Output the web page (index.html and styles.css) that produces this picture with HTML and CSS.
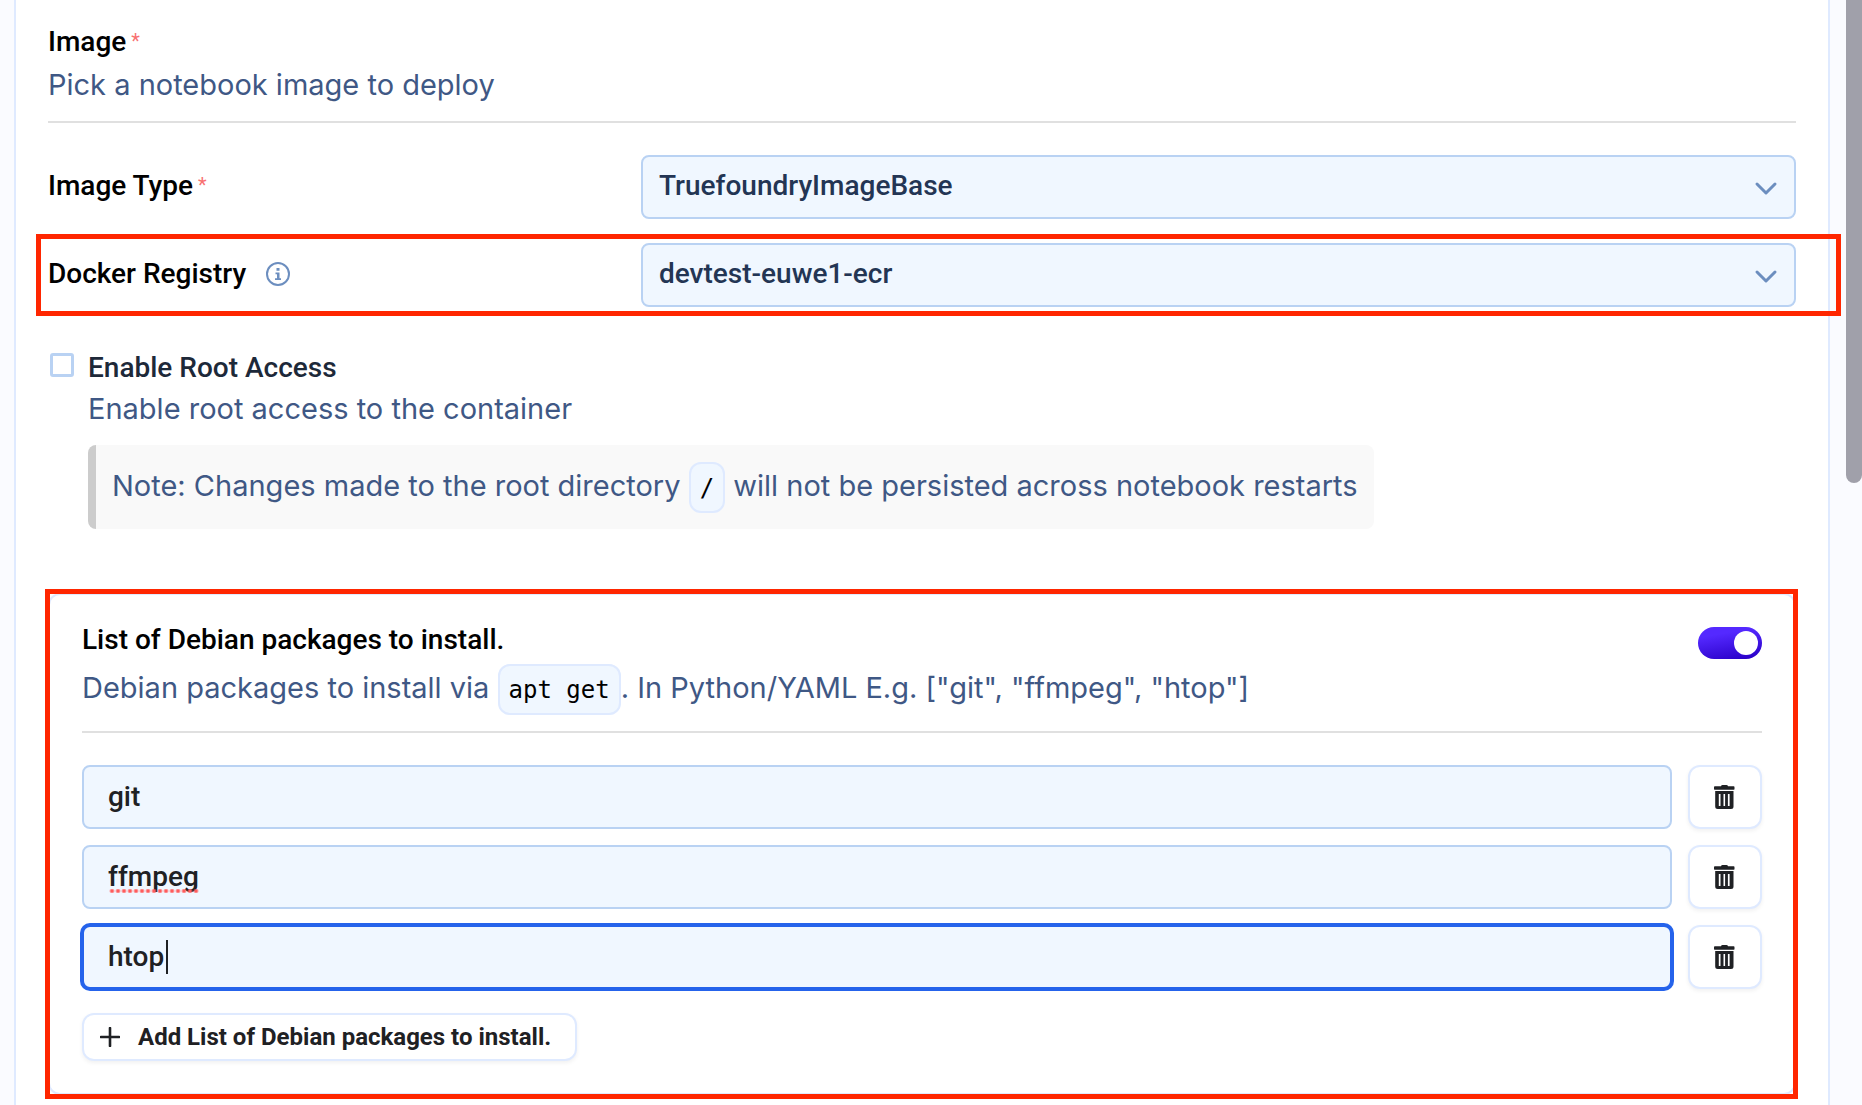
FILE: index.html
```html
<!DOCTYPE html>
<html lang="en">
<head>
<meta charset="utf-8">
<meta name="viewport" content="width=device-width, initial-scale=1">
<title>Notebook image</title>
<link rel="stylesheet" href="styles.css">
</head>
<body>
<svg class="sprite" aria-hidden="true">
  <symbol id="chevron" viewBox="0 0 24 24"><path d="M3 8l9 9 9-9" fill="none" stroke="currentColor" stroke-width="3" stroke-linecap="round" stroke-linejoin="round"/></symbol>
  <symbol id="trash" viewBox="0 0 22 24"><path fill="currentColor" fill-rule="evenodd" d="M7 1.300Q7.300 0 8.500 0h4Q13.700 0 14 1.300h5.700a1 1 0 0 1 .8 1V4a.7.7 0 0 1-.8.700H.800A.7.700 0 0 1 0 4V2.300a1 1 0 0 1 .8-1zM1.200 6h18.300v15.500a2.500 2.500 0 0 1-2.500 2.500H3.700A2.500 2.500 0 0 1 1.200 21.500zM4.800 9v12h1.700V9zm4.700 0v12h1.600V9zm4.400 0v12h1.700V9z"/></symbol>
</svg>
<main class="panel">
  <header class="section-head">
    <h2 class="title">Image<span class="required">*</span></h2>
    <p class="desc">Pick a notebook image to deploy</p>
  </header>

  <div class="rows">
    <div class="row">
      <div class="row-label">
        <label class="title" for="image-type">Image Type<span class="required">*</span></label>
      </div>
      <div class="select">
        <select id="image-type"><option>TruefoundryImageBase</option></select>
        <svg class="chevron" aria-hidden="true"><use href="#chevron"/></svg>
      </div>
    </div>
    <div class="row">
      <div class="row-label">
        <label class="title" for="registry">Docker Registry</label>
        <svg class="info" viewBox="0 0 24 24" aria-hidden="true"><circle cx="12" cy="12" r="11" fill="none" stroke="currentColor" stroke-width="2"/><path fill="currentColor" d="M10.500 6h3v2.800h-3zM9.500 10.500h4v5.700H15V18H9v-1.800h2v-3.900H9.500z"/></svg>
      </div>
      <div class="select">
        <select id="registry"><option>devtest-euwe1-ecr</option></select>
        <svg class="chevron" aria-hidden="true"><use href="#chevron"/></svg>
      </div>
      <div class="highlight highlight-row"></div>
    </div>
  </div>

  <div class="check">
    <input class="box" type="checkbox" id="root">
    <div class="check-body">
      <label class="title check-title" for="root">Enable Root Access</label>
      <p class="desc">Enable root access to the container</p>
      <blockquote class="note desc">Note: Changes made to the root directory <code>/</code> will not be persisted across notebook restarts</blockquote>
    </div>
  </div>

  <section class="card">
    <header class="section-head card-head">
      <div>
        <h2 class="title" id="pkg-title">List of Debian packages to install.</h2>
        <p class="desc code-line">Debian packages to install via <code>apt get</code>. In Python/YAML E.g. ["git", "ffmpeg", "htop"]</p>
      </div>
      <input class="toggle" type="checkbox" role="switch" aria-labelledby="pkg-title" checked>
    </header>
    <div class="packages">
      <div class="package">
        <div class="field"><input type="text" aria-label="Package 1" value="git" spellcheck="false"></div>
        <button class="button remove" type="button" aria-label="Remove git"><svg aria-hidden="true"><use href="#trash"/></svg></button>
      </div>
      <div class="package">
        <div class="field"><input type="text" aria-label="Package 2" value="ffmpeg" spellcheck="false"><span class="spelling"></span></div>
        <button class="button remove" type="button" aria-label="Remove ffmpeg"><svg aria-hidden="true"><use href="#trash"/></svg></button>
      </div>
      <div class="package">
        <div class="field is-active"><input type="text" aria-label="Package 3" value="htop" spellcheck="false"><span class="caret"></span></div>
        <button class="button remove" type="button" aria-label="Remove htop"><svg aria-hidden="true"><use href="#trash"/></svg></button>
      </div>
    </div>
    <button class="button add" type="button">
      <svg viewBox="0 0 20 20" aria-hidden="true"><path d="M10 1v18M1 10h18" fill="none" stroke="currentColor" stroke-width="2.600" stroke-linecap="round"/></svg>
      Add List of Debian packages to install.
    </button>
    <div class="highlight highlight-card"></div>
  </section>
</main>
<div class="scroll-thumb"></div>
</body>
</html>
```
FILE: styles.css
```css
* { box-sizing: border-box; }

body {
  margin: 0;
  min-height: 100vh;
  display: flex;
  overflow: hidden;
  background: #fafbff;
  color: #000;
  font-family: Roboto, "Liberation Sans", sans-serif;
}

h2, p, blockquote { margin: 0; }

.sprite { position: absolute; width: 0; height: 0; }

.panel {
  flex: 1;
  min-width: 0;
  margin: 0 32px 0 14px;
  padding: 24px 32px 0;
  border: solid #dfeaff;
  border-width: 0 2px;
  background: #fff;
}

.title {
  font-size: 28px;
  font-weight: 500;
  line-height: 36px;
}

.required {
  margin-left: 5px;
  color: #f87171;
  font-size: 20px;
  font-weight: 400;
  vertical-align: 3px;
  line-height: 20px;
}

.desc {
  color: #3f5885;
  font-family: Inter, "Open Sans", sans-serif;
  font-size: 29px;
  font-weight: 400;
  line-height: 36px;
}

.section-head {
  padding-bottom: 18px;
  border-bottom: 2px solid #e0e0e0;
}

.section-head .desc { margin-top: 7px; }

.rows {
  display: grid;
  gap: 24px;
  padding-top: 32px;
}

.row {
  position: relative;
  display: grid;
  grid-template-columns: 593px 1fr;
  align-items: center;
}

.row-label {
  display: flex;
  align-items: center;
  gap: 20px;
  padding-bottom: 2px;
}

.info { width: 24px; height: 24px; color: #6c8ebf; }

.select { position: relative; }

.select select {
  display: block;
  width: 100%;
  height: 64px;
  padding: 0 60px 2px 16px;
  appearance: none;
  border: 2px solid #b9d2f3;
  border-radius: 8px;
  background: #f0f7ff;
  color: #233554;
  font: 500 28px/36px Roboto, "Liberation Sans", sans-serif;
}

.chevron {
  position: absolute;
  right: 18px;
  top: 21px;
  width: 24px;
  height: 24px;
  color: #6c8ebf;
  pointer-events: none;
}

.check {
  display: flex;
  gap: 14px;
  padding: 42px 2px 0;
}

.box {
  appearance: none;
  flex: none;
  width: 24px;
  height: 24px;
  margin: 4px 0 0;
  border: 3px solid #b9d2f3;
  border-radius: 3px;
  background: #fff;
}

.check-body {
  display: flex;
  flex-direction: column;
  align-items: flex-start;
}

.check-title { padding-top: 1px; color: #1d2939; }

.check-body .desc { margin-top: 5px; }

.check-body .note {
  margin-top: 18px;
  padding: 16px 16px 18px;
  border-left: 8px solid #ccc;
  border-radius: 8px;
  background: #f9f9f9;
  line-height: 50px;
}

code {
  padding: 10px 9px 9px;
  border: 2px solid #dfeaff;
  border-radius: 12px;
  background: #f0f7ff;
  color: #000;
  font-family: "DejaVu Sans Mono", "Liberation Mono", monospace;
  font-size: 24px;
  font-weight: 400;
  line-height: 24px;
}

.card {
  position: relative;
  margin-top: 64px;
  padding: 27px 32px 32px;
  border: 2px solid #dfeaff;
  border-radius: 12px;
}

.card-head {
  display: flex;
  justify-content: space-between;
  align-items: flex-start;
}

.card-head .code-line { margin-top: 5px; line-height: 50px; }

.toggle {
  appearance: none;
  display: flex;
  justify-content: flex-end;
  flex: none;
  width: 64px;
  height: 32px;
  margin: 5px 0 0;
  padding: 4px;
  border-radius: 16px;
  background: linear-gradient(170deg, #5429ff 25%, #2a00c8 95%);
}

.toggle::before {
  content: "";
  width: 24px;
  height: 24px;
  border-radius: 50%;
  background: #fff;
}

.packages {
  display: grid;
  gap: 16px;
  padding: 32px 0 24px;
}

.package { display: flex; gap: 16px; }

.field { position: relative; flex: 1; }

.field input {
  display: block;
  width: 100%;
  height: 64px;
  padding: 0 24px 2px;
  border: 2px solid #b9d2f3;
  border-radius: 8px;
  outline: none;
  background: #f0f7ff;
  color: #1f2124;
  font: 500 28px/36px Roboto, "Liberation Sans", sans-serif;
}

.is-active input {
  border-color: #2563eb;
  box-shadow: 0 0 0 2px #2563eb;
}

.spelling {
  position: absolute;
  left: 27px;
  top: 44px;
  width: 90px;
  height: 4px;
  background: radial-gradient(circle, #ff5c5c 1px, #ff5c5c 1px, transparent 3px) 0 0 / 6px 4px;
}

.caret {
  position: absolute;
  left: 84px;
  top: 15px;
  width: 2px;
  height: 34px;
  background: #1f2124;
}

.button {
  border: 2px solid #dfeaff;
  border-radius: 12px;
  background: #fff;
  box-shadow: 0 2px 4px rgba(0, 0, 0, .06);
  color: #1f2124;
}

.remove {
  display: grid;
  place-items: center;
  width: 74px;
  padding: 0;
}

.remove svg { width: 22px; height: 24px; }

.add {
  display: flex;
  align-items: center;
  gap: 18px;
  height: 48px;
  padding: 0 24px 0 16px;
  font: 700 24px/32px Roboto, "Liberation Sans", sans-serif;
}

.add svg { width: 20px; height: 20px; }

.highlight {
  position: absolute;
  border: 5px solid #ff2600;
  pointer-events: none;
}

.highlight-row { inset: -9px -45px -9px -12px; }

.highlight-card { inset: -6px -4px -6px -5px; }

.scroll-thumb {
  position: fixed;
  top: 0;
  right: 0;
  width: 16px;
  height: 483px;
  border-radius: 0 0 8px 8px;
  background: #a0a0aa;
}
```
